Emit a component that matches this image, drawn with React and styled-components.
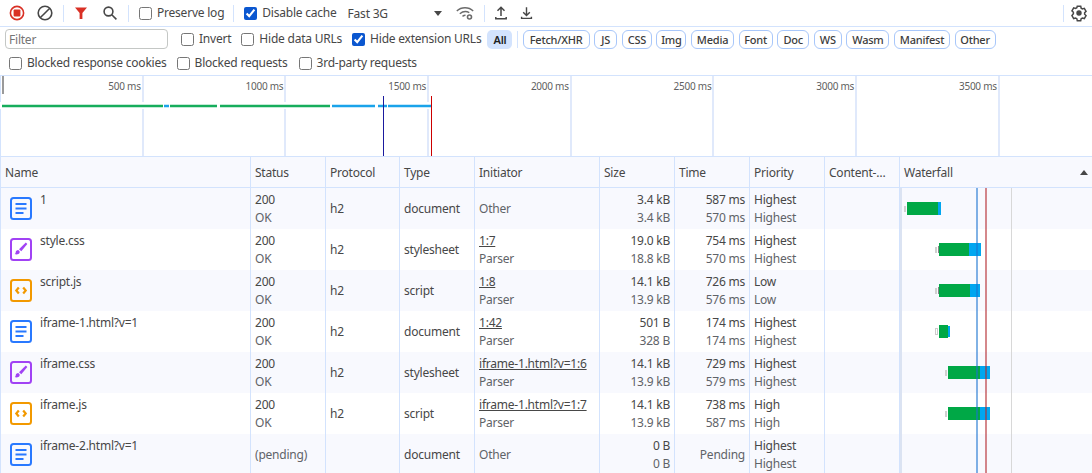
import React from 'react';
import styled, { createGlobalStyle } from 'styled-components';

const GlobalStyle = createGlobalStyle`
	html, body {
		margin: 0;
		padding: 0;
		background: #fff;
	}
	body {
		width: 1092px;
		height: 473px;
		overflow: hidden;
		font-family: 'Noto Sans', 'Open Sans', sans-serif;
		font-size: 12px;
		letter-spacing: -0.22px;
		color: #474747;
	}
	* {
		box-sizing: border-box;
	}
`;

const Panel = styled.div`
	position: relative;
	width: 1092px;
	height: 473px;
	overflow: hidden;
`;

const Toolbar = styled.div`
	display: flex;
	align-items: center;
	height: 27px;
	padding-left: 4px;
	border-bottom: 1px solid #d3e3fd;
`;

const ToolButton = styled.span`
	display: flex;
	flex: none;
	align-items: center;
	justify-content: center;
	width: ${(p) => p.$w || 28}px;
	height: 26px;
	padding-left: ${(p) => p.$pad || 0}px;
`;

const Divider = styled.span`
	flex: none;
	width: 1px;
	height: 17px;
	margin: 0 ${(p) => p.$gap || 0}px;
	background: #d3e3fd;
`;

const CheckLabel = styled.label`
	display: flex;
	flex: none;
	align-items: center;
	gap: 5px;
	margin: ${(p) => p.$margin || '0'};
	white-space: nowrap;
	line-height: 16px;
`;

const Check = styled.input.attrs({ type: 'checkbox', readOnly: true })`
	width: 13px;
	height: 13px;
	margin: 0;
	accent-color: #0b57d0;
`;

const Throttle = styled.span`
	display: flex;
	flex: none;
	align-items: center;
	justify-content: space-between;
	width: 94px;
	margin-left: 11px;
`;

const Caret = styled.span`
	width: 0;
	height: 0;
	border-left: 4px solid transparent;
	border-right: 4px solid transparent;
	border-top: 5px solid #474747;
`;

const Spacer = styled.span`
	flex: 1;
`;

const FilterRow = styled.div`
	display: flex;
	align-items: center;
	height: 24px;
	padding-left: 5px;
`;

const FilterInput = styled.input`
	flex: none;
	width: 163px;
	height: 20px;
	margin-right: 13px;
	padding: 0 3px;
	border: 1px solid #c4c7c5;
	border-radius: 4px;
	font: inherit;
	letter-spacing: inherit;
	color: #474747;
	&::placeholder {
		color: #757575;
	}
`;

const Pills = styled.div`
	display: flex;
	flex: none;
	align-items: center;
	gap: 4.6px;
	margin-left: ${(p) => p.$left}px;
`;

const AllPill = styled.span`
	width: 25px;
	height: 19px;
	border-radius: 5px;
	background: #d3e3fd;
	color: #1f1f1f;
	font-size: 11px;
	font-weight: 600;
	line-height: 19px;
	text-align: center;
`;

const Pill = styled.span`
	display: flex;
	align-items: center;
	justify-content: center;
	width: ${(p) => p.$w}px;
	height: 19px;
	border: 1px solid #a8c7fa;
	border-radius: 6px;
	color: #3c3c3c;
	font-size: 11px;
	font-weight: 500;
`;

const SecondFilterRow = styled(FilterRow)`
	height: 25px;
	padding-left: 9px;
	border-bottom: 1px solid #d3e3fd;
`;

const Overview = styled.div`
	position: relative;
	display: flex;
	height: 81px;
	border-left: 1px solid #d3e3fd;
	border-bottom: 1px solid #d3e3fd;
`;

const Tick = styled.div`
	flex: 0 0 142.7px;
	padding: 3px 1px 0 0;
	border-right: 2px solid #e0e9fb;
	font-size: 10px;
	letter-spacing: -0.25px;
	line-height: 15px;
	text-align: right;
	color: #5f5f5f;
`;

const OverviewChart = styled.svg`
	position: absolute;
	top: 0;
	left: -1px;
`;

const Table = styled.div`
	position: relative;
	border-left: 1px solid #d3e3fd;
`;

const Columns = '250px 75px 74px 75px 125px 75px 75px 75px 75px 192px';

const Row = styled.div`
	display: grid;
	grid-template-columns: ${Columns};
	height: 41px;
	background: ${(p) => (p.$alt ? '#f8f9fe' : '#fff')};
`;

const HeadRow = styled(Row)`
	height: 31px;
	background: #f8f9fe;
	border-bottom: 1px solid #d3e3fd;
`;

const HeadCell = styled.div`
	display: flex;
	align-items: center;
	justify-content: space-between;
	padding: 0 4px;
	border-right: 1px solid #d3e3fd;
	white-space: nowrap;
	&:last-child {
		border-right: 0;
		padding-right: 4px;
	}
`;

const SortArrow = styled.span`
	width: 0;
	height: 0;
	border-left: 4px solid transparent;
	border-right: 4px solid transparent;
	border-bottom: 5px solid #474747;
`;

const Cell = styled.div`
	display: flex;
	flex-direction: column;
	justify-content: center;
	align-items: ${(p) => (p.$right ? 'flex-end' : 'flex-start')};
	padding: 0 4px;
	border-right: 1px solid #d3e3fd;
	white-space: nowrap;
	line-height: 18px;
	&:last-child {
		border-right: 0;
	}
`;

const NameCell = styled.div`
	display: flex;
	align-items: flex-start;
	padding: 3px 0 0 9px;
	border-right: 1px solid #d3e3fd;
	line-height: 18px;
`;

const FileIcon = styled.svg`
	flex: none;
	margin: 6px 8px 0 0;
`;

const Primary = styled.span`
	color: ${(p) => (p.$muted ? '#5f6368' : 'inherit')};
	text-decoration: ${(p) => (p.$link ? 'underline' : 'none')};
`;

const Sub = styled.span`
	color: #5f6368;
`;

const WaterfallChart = styled.svg`
	position: absolute;
	top: 31px;
	left: 897px;
`;

function RecordIcon() {
	return (
		<svg width='18' height='18' viewBox='0 0 18 18'>
			<circle cx='9' cy='9' r='6.6' fill='none' stroke='#d93025' strokeWidth='1.6' />
			<rect x='5.6' y='5.6' width='6.8' height='6.8' rx='1' fill='#d93025' />
		</svg>
	);
}

function ClearIcon() {
	return (
		<svg width='18' height='18' viewBox='0 0 18 18' fill='none' stroke='#474747' strokeWidth='1.6'>
			<circle cx='9' cy='9' r='6.8' />
			<path d='M13.8 4.2 4.2 13.8' />
		</svg>
	);
}

function FunnelIcon() {
	return (
		<svg width='18' height='18' viewBox='0 0 18 18'>
			<path d='M3 3.500h12L10.400 9v6H7.600V9z' fill='#d93025' />
		</svg>
	);
}

function SearchIcon() {
	return (
		<svg width='18' height='18' viewBox='0 0 18 18' fill='none' stroke='#474747' strokeWidth='1.6'>
			<circle cx='7.500' cy='7.500' r='4.400' />
			<path d='m10.800 10.800 4.600 4.600' />
		</svg>
	);
}

function NetworkConditionsIcon() {
	return (
		<svg width='20' height='18' viewBox='0 0 20 18' fill='none' stroke='#6b6b6b' strokeWidth='1.4'>
			<path d='M1.800 7c4.500-4.400 11.900-4.400 16.400 0' />
			<path d='M4.800 9.800c2.800-2.400 6.500-2.800 9.500-1.200' />
			<path d='M7.500 12.400c1-.8 2-1.100 3-1.100' />
			<circle cx='14.500' cy='13' r='2' strokeWidth='1.600' />
		</svg>
	);
}

function UploadIcon() {
	return (
		<svg width='18' height='18' viewBox='0 0 18 18' fill='none' stroke='#474747' strokeWidth='1.5'>
			<path d='M9 12V3.500M5.500 6.800 9 3.300l3.500 3.500M3.800 13v1.700h10.400V13' />
		</svg>
	);
}

function DownloadIcon() {
	return (
		<svg width='18' height='18' viewBox='0 0 18 18' fill='none' stroke='#474747' strokeWidth='1.5'>
			<path d='M9 3v8.500M5.500 8.200 9 11.700l3.500-3.500M3.800 13v1.700h10.400V13' />
		</svg>
	);
}

function SettingsIcon() {
	return (
		<svg width='18' height='18' viewBox='0 0 24 24' fill='none' stroke='#474747' strokeWidth='2'>
			<path d='M9.700 3h4.600l.6 2.600 1.700 1 2.500-.8 2.300 4-1.900 1.800v2l1.900 1.800-2.300 4-2.500-.8-1.700 1-.6 2.600H9.700l-.6-2.600-1.700-1-2.500.8-2.300-4L4.500 13v-2L2.600 9.200l2.300-4 2.500.8 1.700-1z' />
			<circle cx='12' cy='12' r='2.600' fill='#474747' />
		</svg>
	);
}

function DocumentIcon() {
	return (
		<FileIcon width='22' height='23' viewBox='0 0 22 23'>
			<rect x='1' y='1' width='20' height='21' rx='2.500' fill='none' stroke='#2979ff' strokeWidth='2' />
			<path d='M5.500 6h11v2h-11zM5.500 10.500h11v2h-11zM5.500 15h8v2h-8z' fill='#2979ff' />
		</FileIcon>
	);
}

function StylesheetIcon() {
	return (
		<FileIcon width='22' height='23' viewBox='0 0 22 23'>
			<rect x='1' y='1' width='20' height='21' rx='2.500' fill='none' stroke='#a142f4' strokeWidth='2' />
			<path d='M15.800 4.500 17.300 6l-6 7.300-2.300-2z' fill='#a142f4' />
			<path d='M8 12c-2 .3-2.200 1.800-2.300 2.500-.1.700-.4 1.200-1 1.500 1.500.7 4.200.5 4.900-1.200.4-1.100-.3-2.500-1.600-2.800z' fill='#a142f4' />
		</FileIcon>
	);
}

function ScriptIcon() {
	return (
		<FileIcon width='22' height='23' viewBox='0 0 22 23'>
			<rect x='1' y='1' width='20' height='21' rx='2.500' fill='none' stroke='#f29900' strokeWidth='2' />
			<path d='M8.800 8.500 6.300 11.500l2.500 3M13.200 8.500l2.500 3-2.500 3' fill='none' stroke='#f29900' strokeWidth='2.200' />
		</FileIcon>
	);
}

const icons = {
	document: DocumentIcon,
	stylesheet: StylesheetIcon,
	script: ScriptIcon,
};

const ticks = ['500 ms', '1000 ms', '1500 ms', '2000 ms', '2500 ms', '3000 ms', '3500 ms'];

const pills = [
	['Fetch/XHR', 67],
	['JS', 23],
	['CSS', 30],
	['Img', 30],
	['Media', 43],
	['Font', 34],
	['Doc', 32],
	['WS', 28],
	['Wasm', 43],
	['Manifest', 56],
	['Other', 41],
];

const headers = ['Name', 'Status', 'Protocol', 'Type', 'Initiator', 'Size', 'Time', 'Priority', 'Content-…'];

const requests = [
	{ name: '1', status: '200', statusText: 'OK', protocol: 'h2', type: 'document', initiator: 'Other', size: '3.4 kB', sizeSub: '3.4 kB', time: '587 ms', timeSub: '570 ms', priority: 'Highest', prioritySub: 'Highest' },
	{ name: 'style.css', status: '200', statusText: 'OK', protocol: 'h2', type: 'stylesheet', initiator: '1:7', link: true, initiatorSub: 'Parser', size: '19.0 kB', sizeSub: '18.8 kB', time: '754 ms', timeSub: '570 ms', priority: 'Highest', prioritySub: 'Highest' },
	{ name: 'script.js', status: '200', statusText: 'OK', protocol: 'h2', type: 'script', initiator: '1:8', link: true, initiatorSub: 'Parser', size: '14.1 kB', sizeSub: '13.9 kB', time: '726 ms', timeSub: '576 ms', priority: 'Low', prioritySub: 'Low' },
	{ name: 'iframe-1.html?v=1', status: '200', statusText: 'OK', protocol: 'h2', type: 'document', initiator: '1:42', link: true, initiatorSub: 'Parser', size: '501 B', sizeSub: '328 B', time: '174 ms', timeSub: '174 ms', priority: 'Highest', prioritySub: 'Highest' },
	{ name: 'iframe.css', status: '200', statusText: 'OK', protocol: 'h2', type: 'stylesheet', initiator: 'iframe-1.html?v=1:6', link: true, initiatorSub: 'Parser', size: '14.1 kB', sizeSub: '13.9 kB', time: '729 ms', timeSub: '579 ms', priority: 'Highest', prioritySub: 'Highest' },
	{ name: 'iframe.js', status: '200', statusText: 'OK', protocol: 'h2', type: 'script', initiator: 'iframe-1.html?v=1:7', link: true, initiatorSub: 'Parser', size: '14.1 kB', sizeSub: '13.9 kB', time: '738 ms', timeSub: '587 ms', priority: 'High', prioritySub: 'High' },
	{ name: 'iframe-2.html?v=1', status: '(pending)', pending: true, protocol: '', type: 'document', initiator: 'Other', size: '0 B', sizeSub: '0 B', time: 'Pending', priority: 'Highest', prioritySub: 'Highest' },
];

// x positions are page pixels, y comes from the row index
const bars = [
	{ wait: 904, start: 907, recv: 938, end: 941 },
	{ wait: 935, start: 939, recv: 969, end: 981, tip: true },
	{ wait: 935, start: 939, recv: 970, end: 980, tip: true },
	{ wait: 935, start: 939, recv: 948, end: 950, hollow: true },
	{ wait: 945, start: 948, recv: 980, end: 990 },
	{ wait: 945, start: 948, recv: 980, end: 990 },
];

function Waterfall() {
	const ox = 898;
	return (
		<WaterfallChart width='194' height='285' viewBox='0 0 194 285'>
			<rect x={900 - ox} width='2' height='285' fill='#dbe3f2' />
			<rect x={1011 - ox} width='1' height='285' fill='#d8d8d8' />
			{bars.map((b, i) => {
				const y = 14 + i * 41;
				return (
					<g key={i}>
						{b.hollow ? (
							<rect x={b.wait - ox + 0.5} y={y + 3.5} width='2' height='6' fill='none' stroke='#ccc' />
						) : (
							<rect x={b.wait - ox} y={y + 4} width='2' height='6' fill='#d0d0d0' />
						)}
						{b.tip && <rect x={b.start - ox - 1} y={y + 3} width='1' height='7' fill='#888' />}
						<rect x={b.start - ox} y={y} width={b.recv - b.start} height='13' fill='#00a846' />
						<rect x={b.recv - ox} y={b.hollow ? y + 1 : y} width={b.end - b.recv} height={b.hollow ? 11 : 13} fill='#00a6f0' />
					</g>
				);
			})}
			<rect x={976 - ox} width='2' height='285' fill='#1a73d0' opacity='0.55' />
			<rect x={985 - ox} width='2' height='285' fill='#b3262b' opacity='0.55' />
		</WaterfallChart>
	);
}

function OverviewBars() {
	return (
		<OverviewChart width='440' height='80' viewBox='0 0 440 80'>
			<rect x='2' y='0' width='2' height='18' fill='#9a9a9a' />
			<rect x='0' y='26' width='432' height='7' fill='#fff' />
			<path d='M2 30h161M170 30h47M220 30h110' stroke='#16ad5c' strokeWidth='2.500' />
			<path d='M164 30h5M332 30h43M378 30h9M388 30h43' stroke='#1aa3ea' strokeWidth='2.500' />
			<rect x='383' y='20' width='1' height='60' fill='#1a1a9e' />
			<rect x='431' y='20' width='1' height='60' fill='#c00' />
		</OverviewChart>
	);
}

function App() {
	return (
		<Panel>
			<GlobalStyle />
			<Toolbar>
				<ToolButton $w={26}><RecordIcon /></ToolButton>
				<ToolButton $w={30}><ClearIcon /></ToolButton>
				<Divider $gap={3} />
				<ToolButton><FunnelIcon /></ToolButton>
				<ToolButton $w={30}><SearchIcon /></ToolButton>
				<Divider $gap={3} />
				<CheckLabel $margin='0 5px 0 7px'><Check />Preserve log</CheckLabel>
				<Divider $gap={4} />
				<CheckLabel $margin='0 0 0 6px'><Check defaultChecked />Disable cache</CheckLabel>
				<Throttle>Fast 3G<Caret /></Throttle>
				<ToolButton $w={42} $pad={4}><NetworkConditionsIcon /></ToolButton>
				<Divider />
				<ToolButton $w={33}><UploadIcon /></ToolButton>
				<ToolButton $w={17}><DownloadIcon /></ToolButton>
				<Spacer />
				<Divider $gap={2} />
				<ToolButton $w={26}><SettingsIcon /></ToolButton>
			</Toolbar>
			<FilterRow>
				<FilterInput placeholder='Filter' readOnly />
				<CheckLabel $margin='0 10px 0 0'><Check />Invert</CheckLabel>
				<CheckLabel $margin='0 10px 0 0'><Check />Hide data URLs</CheckLabel>
				<CheckLabel><Check defaultChecked />Hide extension URLs</CheckLabel>
				<Pills $left={6}>
					<AllPill>All</AllPill>
					<Divider />
					{pills.map(([label, w]) => (
						<Pill key={label} $w={w}>{label}</Pill>
					))}
				</Pills>
			</FilterRow>
			<SecondFilterRow>
				<CheckLabel $margin='0 10px 0 0'><Check />Blocked response cookies</CheckLabel>
				<CheckLabel $margin='0 11px 0 0'><Check />Blocked requests</CheckLabel>
				<CheckLabel><Check />3rd-party requests</CheckLabel>
			</SecondFilterRow>
			<Overview>
				{ticks.map((t) => (
					<Tick key={t}>{t}</Tick>
				))}
				<OverviewBars />
			</Overview>
			<Table>
				<HeadRow>
					{headers.map((h) => (
						<HeadCell key={h}>{h}</HeadCell>
					))}
					<HeadCell>Waterfall<SortArrow /></HeadCell>
				</HeadRow>
				{requests.map((r, i) => {
					const Icon = icons[r.type];
					return (
						<Row key={r.name} $alt={i % 2 === 0}>
							<NameCell><Icon />{r.name}</NameCell>
							<Cell>
								<Primary $muted={r.pending}>{r.status}</Primary>
								{r.statusText && <Sub>{r.statusText}</Sub>}
							</Cell>
							<Cell>{r.protocol}</Cell>
							<Cell>{r.type}</Cell>
							<Cell>
								<Primary $link={r.link} $muted={!r.link}>{r.initiator}</Primary>
								{r.initiatorSub && <Sub>{r.initiatorSub}</Sub>}
							</Cell>
							<Cell $right>
								<Primary>{r.size}</Primary>
								<Sub>{r.sizeSub}</Sub>
							</Cell>
							<Cell $right>
								<Primary $muted={r.pending}>{r.time}</Primary>
								{r.timeSub && <Sub>{r.timeSub}</Sub>}
							</Cell>
							<Cell>
								<Primary>{r.priority}</Primary>
								<Sub>{r.prioritySub}</Sub>
							</Cell>
							<Cell />
							<Cell />
						</Row>
					);
				})}
				<Waterfall />
			</Table>
		</Panel>
	);
}

export default App;
